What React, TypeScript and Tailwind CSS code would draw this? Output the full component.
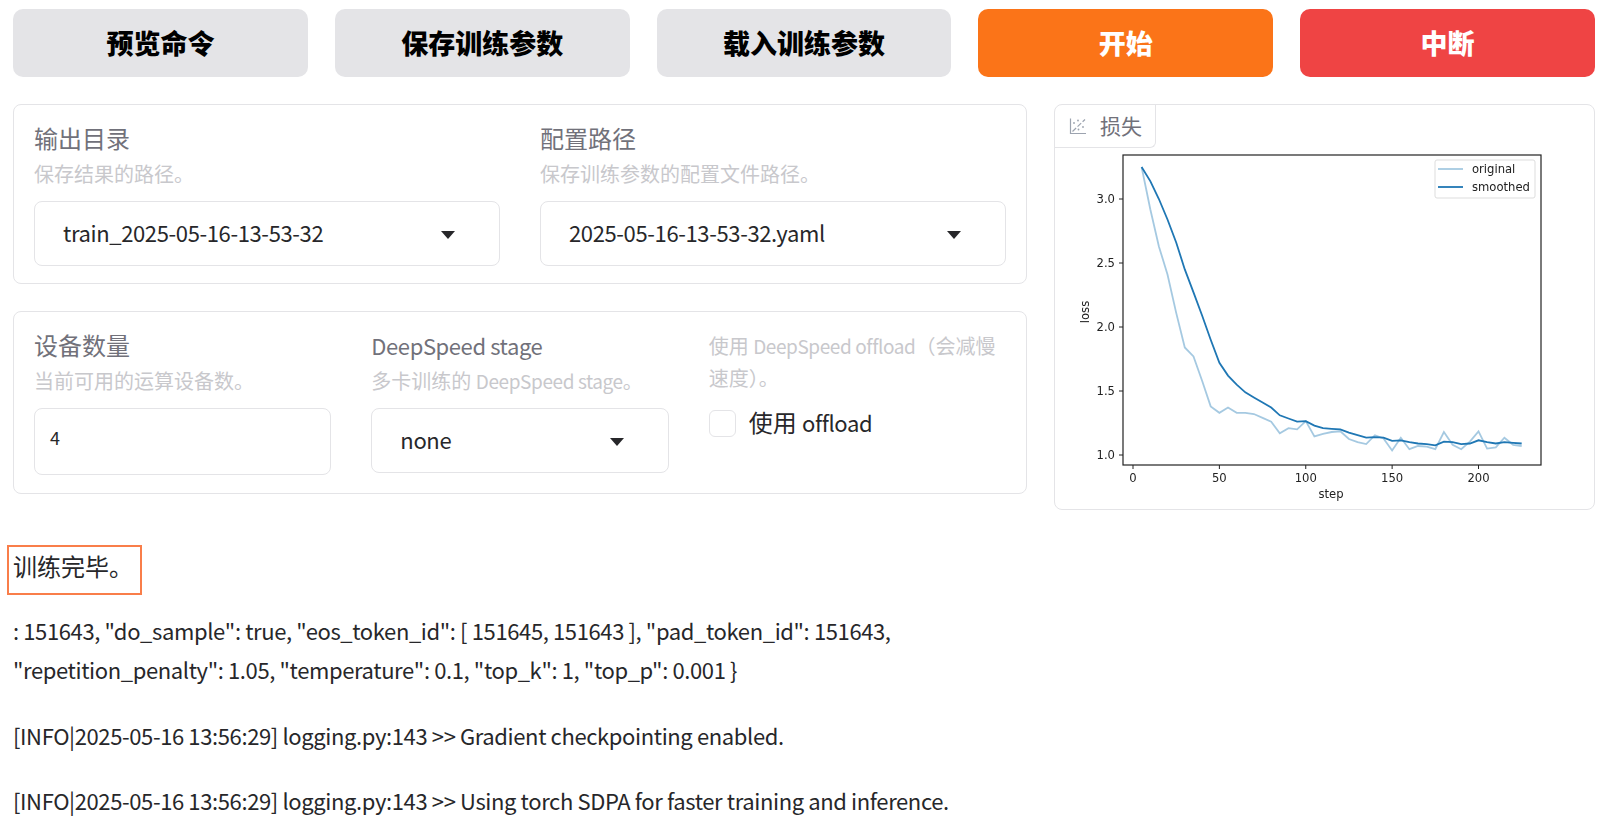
import React from 'react';

const font = { fontFamily: '"Noto Sans CJK SC", "Noto Sans", sans-serif' };

const original = [3.25, 2.92, 2.63, 2.41, 2.11, 1.84, 1.77, 1.58, 1.38, 1.33, 1.37, 1.33, 1.33, 1.32, 1.29, 1.26, 1.17, 1.21, 1.2, 1.265, 1.145, 1.165, 1.18, 1.185, 1.125, 1.1, 1.085, 1.155, 1.13, 1.035, 1.135, 1.045, 1.07, 1.065, 1.045, 1.18, 1.08, 1.045, 1.105, 1.185, 1.05, 1.06, 1.135, 1.08, 1.07];
const smoothed = [3.25, 3.14, 3.0, 2.84, 2.66, 2.45, 2.27, 2.09, 1.9, 1.72, 1.62, 1.55, 1.49, 1.45, 1.41, 1.37, 1.31, 1.285, 1.26, 1.265, 1.23, 1.21, 1.205, 1.2, 1.175, 1.155, 1.135, 1.14, 1.135, 1.11, 1.115, 1.1, 1.09, 1.085, 1.075, 1.105, 1.1, 1.085, 1.09, 1.115, 1.1, 1.09, 1.1, 1.095, 1.09];

// chart coords are relative to the panel image: x0 = step 0, y = 1.0 baseline
const px = (step: number) => 78 + step * 1.7275;
const py = (v: number) => 307 - (v - 1) * 128;
const toPoints = (vals: number[]) => vals.map((v, i) => `${px((i + 1) * 5).toFixed(1)},${py(v).toFixed(1)}`).join(' ');

const LossChart: React.FC = () => (
    <svg width="539" height="360" viewBox="0 0 539 360" className="block blur-[0.3px]" style={{ fontFamily: '"DejaVu Sans", sans-serif' }}>
        <rect x="68" y="7" width="418" height="310" fill="white" stroke="#222" strokeWidth="1.2" />
        <polyline points={toPoints(original)} fill="none" stroke="#1f77b4" strokeOpacity="0.4" strokeWidth="1.8" />
        <polyline points={toPoints(smoothed)} fill="none" stroke="#1f77b4" strokeWidth="1.8" />
        {[0, 50, 100, 150, 200].map(s => (
            <g key={s}>
                <line x1={px(s)} x2={px(s)} y1="317" y2="321" stroke="#222" />
                <text x={px(s)} y="334" textAnchor="middle" fontSize="11.6" fill="#222">{s}</text>
            </g>
        ))}
        {[1, 1.5, 2, 2.5, 3].map(v => (
            <g key={v}>
                <line x1="64" x2="68" y1={py(v)} y2={py(v)} stroke="#222" />
                <text x="60" y={py(v) + 4} textAnchor="end" fontSize="11.6" fill="#222">{v.toFixed(1)}</text>
            </g>
        ))}
        <text x="276" y="350" textAnchor="middle" fontSize="11.6" fill="#222">step</text>
        <text transform="translate(34 164) rotate(-90)" textAnchor="middle" fontSize="11.6" fill="#222">loss</text>
        <rect x="380" y="12" width="100" height="38" rx="2" fill="white" stroke="#ddd" />
        <line x1="383" x2="408" y1="21" y2="21" stroke="#1f77b4" strokeOpacity="0.4" strokeWidth="1.8" />
        <line x1="383" x2="408" y1="39" y2="39" stroke="#1f77b4" strokeWidth="1.8" />
        <text x="417" y="25" fontSize="11.6" fill="#222">original</text>
        <text x="417" y="43" fontSize="11.6" fill="#222">smoothed</text>
    </svg>
);

const PlotIcon: React.FC = () => (
    <svg width="18" height="18" viewBox="0 0 18 18" fill="none" stroke="#9ca3af" strokeWidth="1.2">
        <path d="M1.5 1.5V16.5H17" />
        <path d="M3.5 14.5L16 2.5" strokeDasharray="5 2" />
        <circle cx="5" cy="6" r="0.9" fill="#9ca3af" stroke="none" />
        <circle cx="9" cy="3.5" r="0.9" fill="#9ca3af" stroke="none" />
        <circle cx="9.5" cy="12.5" r="0.9" fill="#9ca3af" stroke="none" />
        <circle cx="14" cy="10" r="0.9" fill="#9ca3af" stroke="none" />
    </svg>
);

const ActionButton: React.FC<{ label: string; className: string }> = ({ label, className }) => (
    <button className={`h-[68px] rounded-[10px] text-[27px] font-black ${className}`}>{label}</button>
);

const FieldHead: React.FC<{ label: React.ReactNode; hint: React.ReactNode }> = ({ label, hint }) => (
    <div>
        <div className="mb-[2px] h-[37px] text-[24px] leading-[37px] text-[#71717a]">{label}</div>
        <div className="h-[32px] text-[20px] leading-[32px] text-[#c8c8cc]">{hint}</div>
    </div>
);

const HintLatin: React.FC<{ children: React.ReactNode }> = ({ children }) => (
    <span className="text-[19px] tracking-[-0.4px]">{children}</span>
);

const SelectBox: React.FC<{ value: string }> = ({ value }) => (
    <div className="mt-[11px] flex h-[65px] items-center justify-between rounded-[8px] border border-[#e4e4e7] pl-[28px] pr-[44px] text-[22px] text-[#27272a]">
        <span className="pb-[2px] tracking-[-0.37px]">{value}</span>
        <span className="mt-[2px] h-0 w-0 border-x-[7px] border-t-[8px] border-x-transparent border-t-[#27272a]" />
    </div>
);

export default function App() {
    return (
        <div className="h-[822px] overflow-hidden bg-white pl-[13px] pr-[7px] pt-[9px] text-[22px] text-[#27272a]" style={font}>
            <div className="grid grid-cols-5 gap-[27px]">
                <ActionButton label="预览命令" className="bg-[#e4e4e7] text-black" />
                <ActionButton label="保存训练参数" className="bg-[#e4e4e7] text-black" />
                <ActionButton label="载入训练参数" className="bg-[#e4e4e7] text-black" />
                <ActionButton label="开始" className="bg-[#fb7418] text-white" />
                <ActionButton label="中断" className="bg-[#ef4444] text-white" />
            </div>

            <div className="mt-[27px] flex gap-[27px]">
                <div className="flex w-[1015px] flex-col gap-[27px]">
                    <div className="grid h-[180px] grid-cols-2 gap-[40px] rounded-[8px] border border-[#e4e4e7] p-[20px] pt-[14px]">
                        <div>
                            <FieldHead label="输出目录" hint="保存结果的路径。" />
                            <SelectBox value="train_2025-05-16-13-53-32" />
                        </div>
                        <div>
                            <FieldHead label="配置路径" hint="保存训练参数的配置文件路径。" />
                            <SelectBox value="2025-05-16-13-53-32.yaml" />
                        </div>
                    </div>

                    <div className="grid h-[183px] grid-cols-3 gap-[40px] rounded-[8px] border border-[#e4e4e7] p-[20px] pt-[14px]">
                        <div>
                            <FieldHead label="设备数量" hint="当前可用的运算设备数。" />
                            <div className="mt-[11px] h-[67px] rounded-[8px] border border-[#e4e4e7] pl-[15px] pt-[12px] text-[18px] leading-[32px]">4</div>
                        </div>
                        <div>
                            <FieldHead
                                label={<span className="text-[22px] tracking-[-0.4px]">DeepSpeed stage</span>}
                                hint={<>多卡训练的 <HintLatin>DeepSpeed stage</HintLatin>。</>}
                            />
                            <SelectBox value="none" />
                        </div>
                        <div className="pt-[4px]">
                            <div className="text-[20px] leading-[32px] text-[#c8c8cc]">使用 <HintLatin>DeepSpeed offload</HintLatin>（会减慢<br />速度）。</div>
                            <label className="mt-[13px] flex items-center gap-[13px]">
                                <span className="h-[27px] w-[27px] rounded-[6px] border border-[#e4e4e7]" />
                                <span className="pb-[2px] text-[24px] leading-[30px] text-[#27272a]">使用 <span className="text-[22px] tracking-[-0.4px]">offload</span></span>
                            </label>
                        </div>
                    </div>
                </div>

                <div className="h-[406px] flex-1 rounded-[8px] border border-[#e4e4e7]">
                    <div className="flex h-[43px] w-[101px] items-center gap-[13px] rounded-br-[6px] border-b border-r border-[#e4e4e7] pl-[14px] text-[21px] leading-[40px] text-[#71717a]">
                        <PlotIcon />
                        <span className="pb-[2px]">损失</span>
                    </div>
                    <LossChart />
                </div>
            </div>

            <div className="-ml-[6px] mt-[35px] h-[50px] w-[135px] border-2 border-[#f97e4a] pl-[4px] text-[24px] leading-[37px] text-[#27272a]">训练完毕。</div>

            <div className="mt-[16px] max-w-[1000px] text-[22px] leading-[39px] tracking-[-0.38px]">
                <p>: 151643, "do_sample": true, "eos_token_id": [ 151645, 151643 ], "pad_token_id": 151643,<br />"repetition_penalty": 1.05, "temperature": 0.1, "top_k": 1, "top_p": 0.001 {'}'}</p>
                <p className="mt-[26.5px]">[INFO|2025-05-16 13:56:29] logging.py:143 &gt;&gt; Gradient checkpointing enabled.</p>
                <p className="mt-[26.5px]">[INFO|2025-05-16 13:56:29] logging.py:143 &gt;&gt; Using torch SDPA for faster training and inference.</p>
            </div>
        </div>
    );
}
